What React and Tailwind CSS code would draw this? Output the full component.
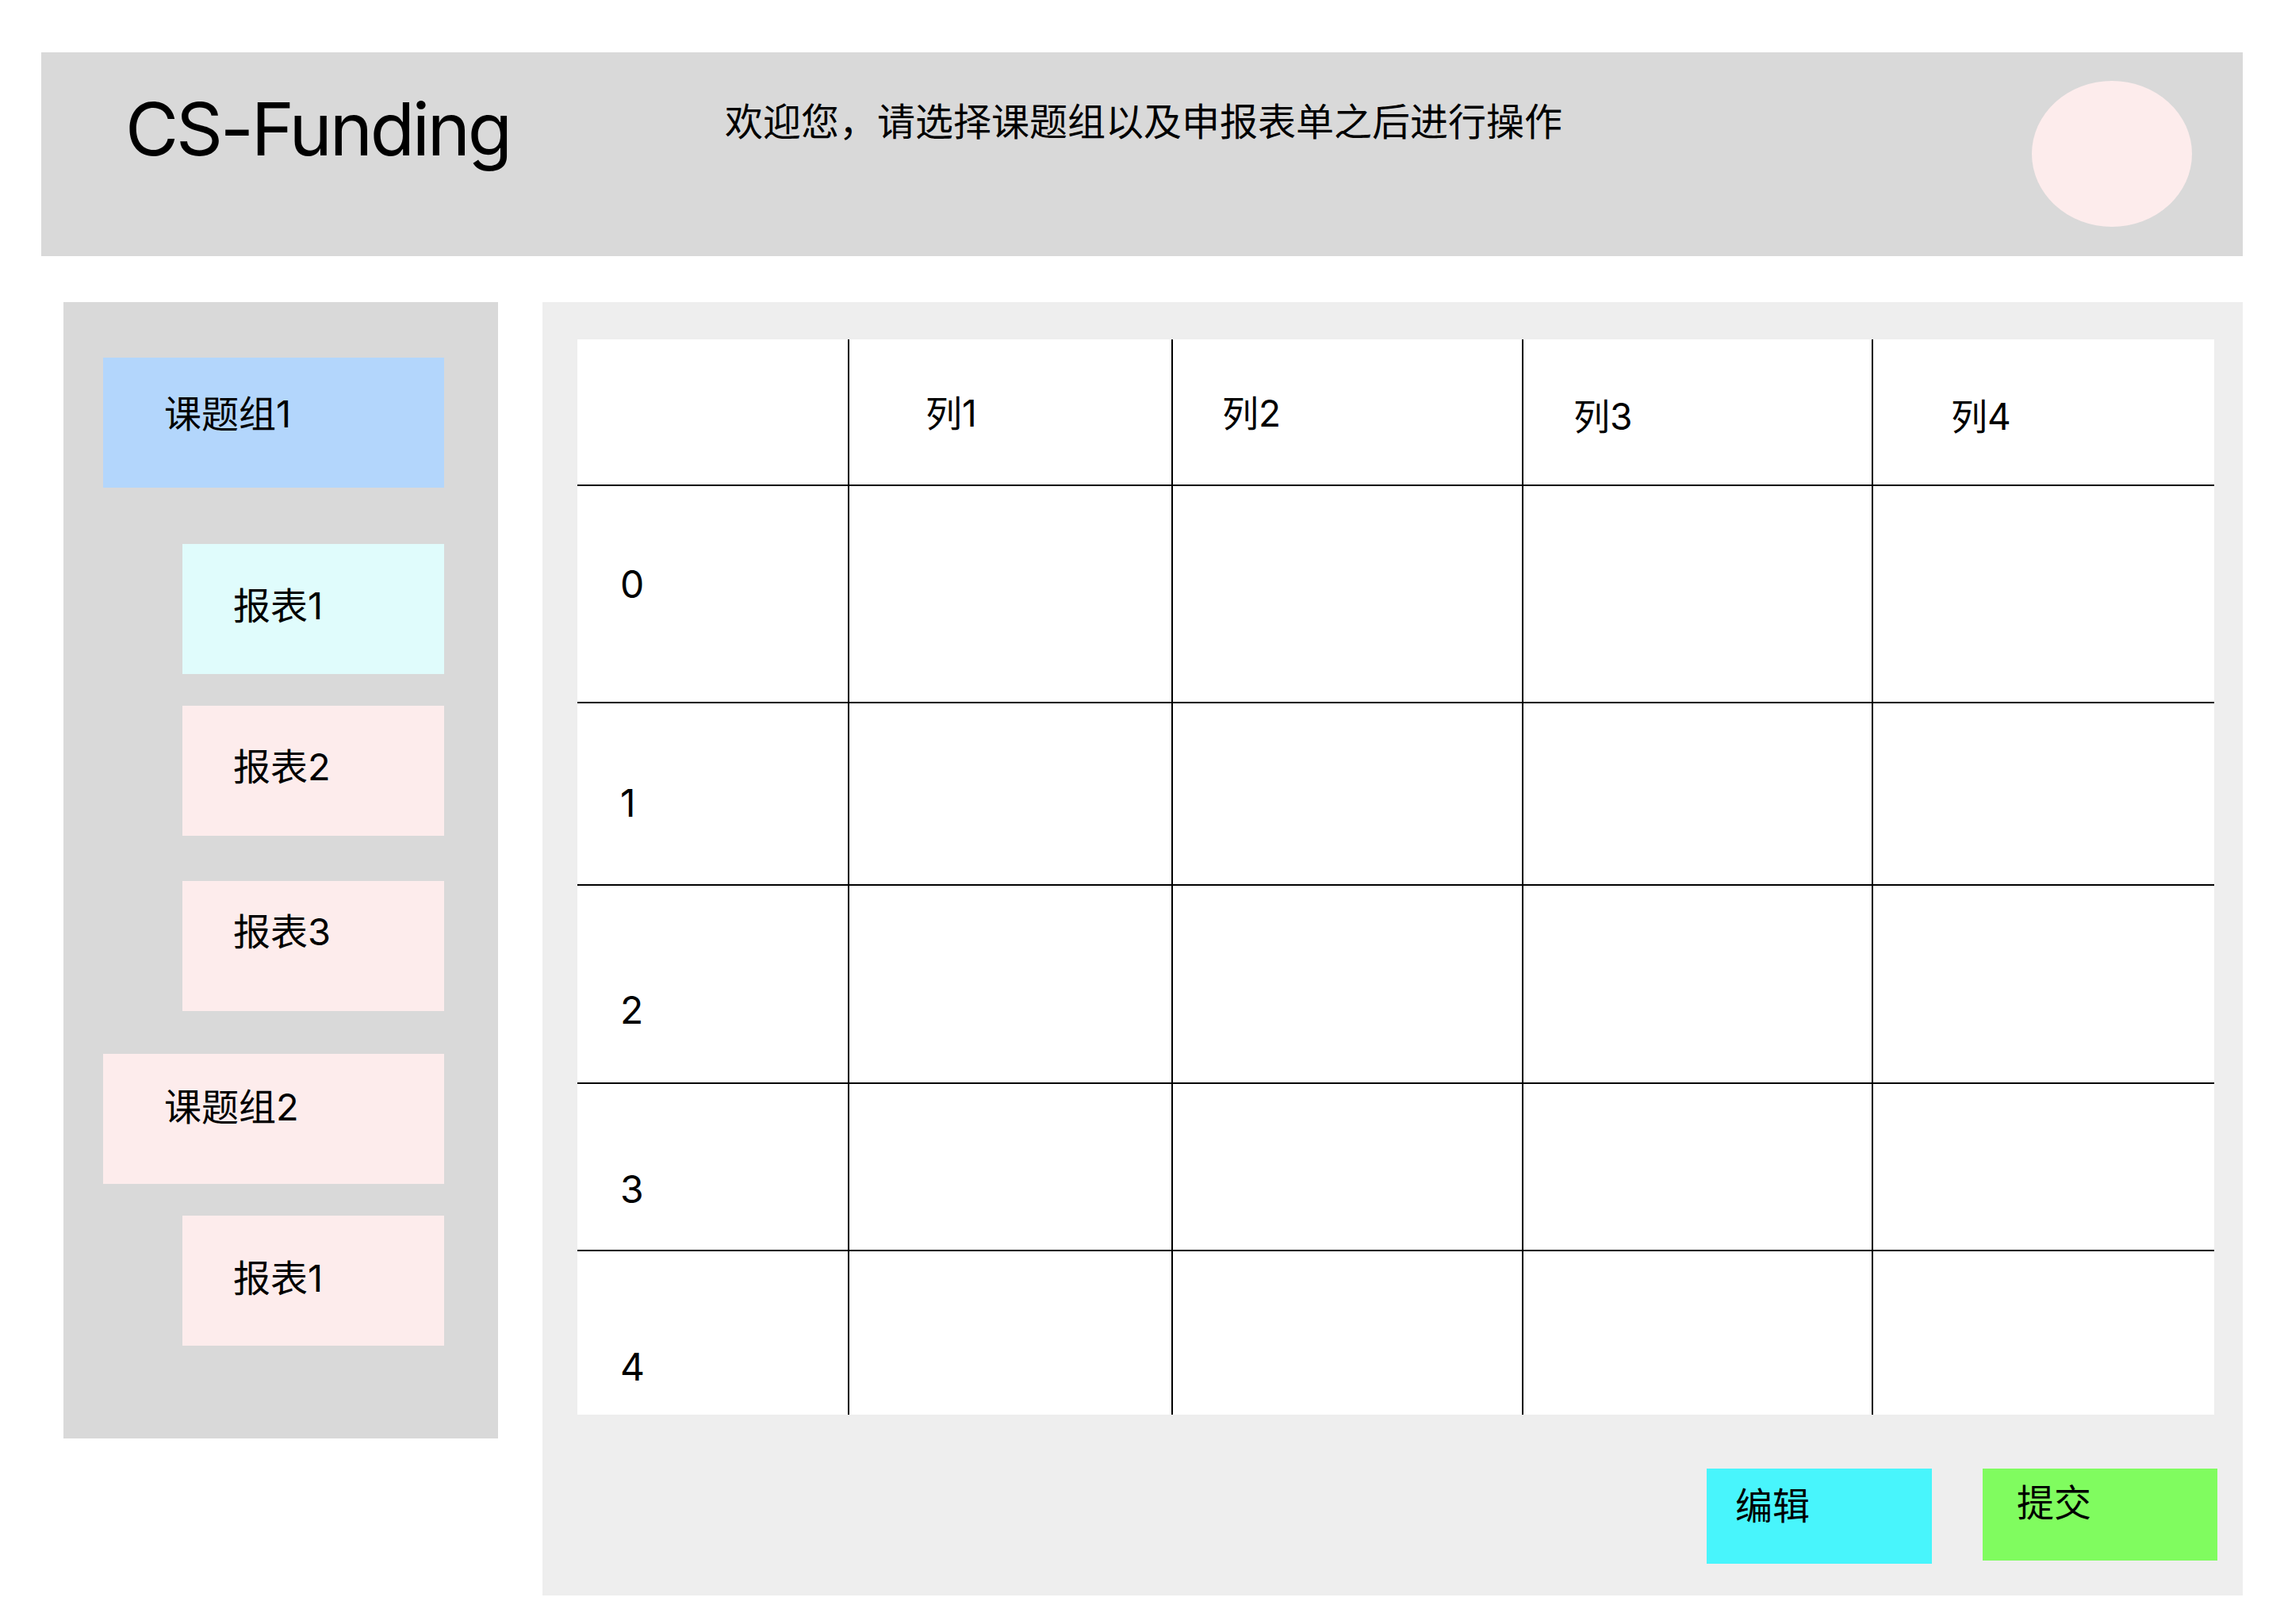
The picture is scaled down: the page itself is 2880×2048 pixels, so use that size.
import React from "react";

const FONT = "font-['Inter','Noto_Sans_CJK_SC',sans-serif]";

const menu = [
  { label: "课题组1", type: "group", bg: "bg-[#b3d6fc]", mt: "mt-0", pt: "pt-[47px]" },
  { label: "报表1", type: "report", bg: "bg-[#e0fcfc]", mt: "mt-[71px]", pt: "pt-[54px]" },
  { label: "报表2", type: "report", bg: "bg-[#fdecec]", mt: "mt-[40px]", pt: "pt-[53px]" },
  { label: "报表3", type: "report", bg: "bg-[#fdecec]", mt: "mt-[57px]", pt: "pt-[40px]" },
  { label: "课题组2", type: "group", bg: "bg-[#fdecec]", mt: "mt-[54px]", pt: "pt-[43px]" },
  { label: "报表1", type: "report", bg: "bg-[#fdecec]", mt: "mt-[40px]", pt: "pt-[55px]" },
];

const columns = [
  { label: "列1", pl: "pl-[96px]", pt: "pt-[70px]" },
  { label: "列2", pl: "pl-[62px]", pt: "pt-[70px]" },
  { label: "列3", pl: "pl-[63px]", pt: "pt-[74px]" },
  { label: "列4", pl: "pl-[98px]", pt: "pt-[74px]" },
];

const rows = [
  { label: "0", pt: "pt-[100px]" },
  { label: "1", pt: "pt-[102px]" },
  { label: "2", pt: "pt-[133px]" },
  { label: "3", pt: "pt-[109px]" },
  { label: "4", pt: "pt-[122px]" },
];

const App = () => {
  return (
    <div className={`w-[2880px] h-[2048px] bg-white pt-[66px] text-black ${FONT}`}>
      {/* Top bar */}
      <div className="ml-[52px] w-[2776px] h-[257px] bg-[#d9d9d9] flex items-start">
        <div className="w-[862px] pl-[106px] pt-[51px] text-[92px] leading-none tracking-[-3.3px]">
          CS-Funding
        </div>
        <div className="pt-[64px] text-[48px] leading-none">
          欢迎您，请选择课题组以及申报表单之后进行操作
        </div>
        <div className="ml-auto mr-[64px] mt-[36px] w-[202px] h-[184px] rounded-[50%] bg-[#fdecec]" />
      </div>

      <div className="flex items-start mt-[58px]">
        {/* Sidebar */}
        <div className="ml-[80px] w-[548px] h-[1433px] bg-[#d9d9d9] pl-[50px] pt-[70px] flex flex-col">
          {menu.map((item, index) => (
            <div
              key={index}
              className={`${item.mt} ${item.bg} ${item.pt} h-[164px] text-[47px] leading-none ${
                item.type === "group" ? "w-[430px] pl-[77px]" : "ml-[100px] w-[330px] pl-[64px]"
              }`}
            >
              {item.label}
            </div>
          ))}
        </div>

        {/* Main panel */}
        <div className="ml-[56px] w-[2144px] h-[1631px] bg-[#eeeeee] pt-[47px] pl-[44px] flex flex-col">
          <div className="w-[2064px] h-[1356px] bg-white grid grid-cols-[341px_408px_442px_441px_432px] grid-rows-[183px_274px_230px_250px_211px_208px]">
            {/* header row */}
            <div />
            {columns.map((col) => (
              <div key={col.label} className={`border-l-2 border-black text-[46px] leading-none ${col.pl} ${col.pt}`}>
                {col.label}
              </div>
            ))}

            {/* body rows */}
            {rows.map((row) => (
              <React.Fragment key={row.label}>
                <div className={`border-t-2 border-black pl-[54px] text-[48px] leading-none ${row.pt}`}>
                  {row.label}
                </div>
                {columns.map((col) => (
                  <div key={col.label} className="border-t-2 border-l-2 border-black" />
                ))}
              </React.Fragment>
            ))}
          </div>

          {/* Actions */}
          <div className="mt-[68px] pr-[32px] flex justify-end items-start gap-[64px]">
            <button className="w-[284px] h-[120px] bg-[#48f5fc] pl-[36px] pt-[23px] flex items-start justify-start text-[47px] leading-none">
              编辑
            </button>
            <button className="w-[296px] h-[116px] bg-[#80fc5f] pl-[43px] pt-[19px] flex items-start justify-start text-[47px] leading-none">
              提交
            </button>
          </div>
        </div>
      </div>
    </div>
  );
};

export default App;
